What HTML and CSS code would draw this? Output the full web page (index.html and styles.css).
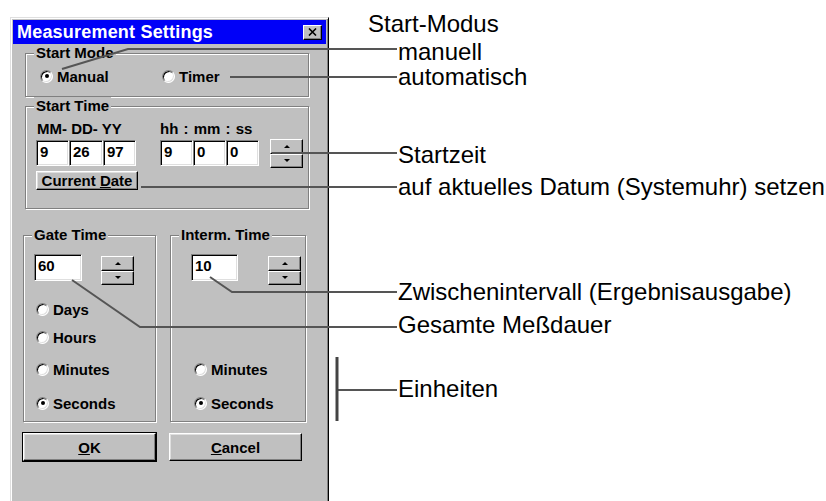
FILE: index.html
```html
<!DOCTYPE html>
<html lang="de">
<head>
<meta charset="UTF-8">
<meta name="viewport" content="width=device-width, initial-scale=1.0">
<title>Measurement Settings</title>
<link rel="stylesheet" href="styles.css">
</head>
<body>
<div class="page">

  <div class="dialog">
    <div class="titlebar">
      <span class="title">Measurement Settings</span>
      <span class="close">
        <svg width="9" height="8" viewBox="0 0 9 8"><path d="M1 0.5 L8 7.5 M8 0.5 L1 7.5" stroke="#000" stroke-width="1.6" fill="none"/></svg>
      </span>
    </div>

    <div class="client">
      <fieldset class="group start-mode">
        <legend>Start Mode</legend>
        <div class="group-body">
          <label class="radio manual"><span class="dot checked"></span>Manual</label>
          <label class="radio"><span class="dot"></span>Timer</label>
        </div>
      </fieldset>

      <fieldset class="group start-time">
        <legend>Start Time</legend>
        <div class="group-body">
          <div class="time-labels">
            <span class="date-label">MM- DD- YY</span>
            <span class="clock-label">hh : mm : ss</span>
          </div>
          <div class="time-row">
            <div class="fields">
              <span class="edit w33">9</span><span class="edit w34">26</span><span class="edit w33">97</span>
            </div>
            <div class="fields clock">
              <span class="edit w33">9</span><span class="edit w33">0</span><span class="edit w33">0</span>
            </div>
            <div class="spin clock-spin">
              <span class="spin-btn"><i class="arrow-up"></i></span>
              <span class="spin-btn"><i class="arrow-down"></i></span>
            </div>
          </div>
          <button type="button" class="btn current">Current <u>D</u>ate</button>
        </div>
      </fieldset>

      <div class="columns">
        <fieldset class="group gate">
          <legend>Gate Time</legend>
          <div class="group-body">
            <div class="value-row">
              <span class="edit value gate-value">60</span>
              <div class="spin">
                <span class="spin-btn"><i class="arrow-up"></i></span>
                <span class="spin-btn"><i class="arrow-down"></i></span>
              </div>
            </div>
            <label class="radio unit days"><span class="dot"></span>Days</label>
            <label class="radio unit hours"><span class="dot"></span>Hours</label>
            <label class="radio unit minutes"><span class="dot"></span>Minutes</label>
            <label class="radio unit seconds"><span class="dot checked"></span>Seconds</label>
          </div>
        </fieldset>

        <fieldset class="group interm">
          <legend>Interm. Time</legend>
          <div class="group-body">
            <div class="value-row">
              <span class="edit value interm-value">10</span>
              <div class="spin">
                <span class="spin-btn"><i class="arrow-up"></i></span>
                <span class="spin-btn"><i class="arrow-down"></i></span>
              </div>
            </div>
            <label class="radio unit minutes first"><span class="dot"></span>Minutes</label>
            <label class="radio unit seconds"><span class="dot checked"></span>Seconds</label>
          </div>
        </fieldset>
      </div>

      <div class="buttons">
        <button type="button" class="btn big default"><u>O</u>K</button>
        <button type="button" class="btn big"><u>C</u>ancel</button>
      </div>
    </div>
  </div>

  <!-- leader lines and captions -->
  <svg class="notes" width="826" height="501" viewBox="0 0 826 501">
    <g class="lead">
      <polyline points="62,69 128,49 397,49"/>
      <polyline points="230,77 397,77"/>
      <polyline points="272,153 397,153"/>
      <polyline points="141,187 397,187"/>
      <polyline points="210,277 232,292 397,292"/>
      <polyline points="72,280 140,327 397,327"/>
      <polyline points="337,390 397,390"/>
    </g>
    <line class="bracket" x1="337" y1="357" x2="337" y2="421"/>
    <text x="368" y="32">Start-Modus</text>
    <text x="398" y="60">manuell</text>
    <text x="398" y="85">automatisch</text>
    <text x="398" y="163">Startzeit</text>
    <text x="398" y="195">auf aktuelles Datum (Systemuhr) setzen</text>
    <text x="398" y="300">Zwischenintervall (Ergebnisausgabe)</text>
    <text x="398" y="333">Gesamte Meßdauer</text>
    <text x="398" y="397">Einheiten</text>
  </svg>

</div>
</body>
</html>
```

FILE: styles.css
```css
body {
  margin: 0;
  background-color: #fff;
  font-family: "Liberation Sans", Arial, sans-serif;
  overflow: hidden;
}
.page {
  position: relative;
  width: 826px;
  height: 501px;
  padding: 17px 0 0 10px;
  box-sizing: border-box;
  overflow: hidden;
}

/* window frame */
.dialog {
  width: 319px;
  height: 500px;
  box-sizing: border-box;
  background-color: #c0c0c0;
  border: 1px solid;
  border-color: #dfdfdf #000 #000 #dfdfdf;
  box-shadow: inset 1px 1px #fff, inset -1px -1px #808080;
  padding: 2px;
  font-size: 15px;
  font-weight: bold;
  color: #000;
}
.titlebar {
  height: 24px;
  background-color: #0000f8;
  display: flex;
  align-items: center;
  justify-content: space-between;
  padding: 0 4px;
}
.title {
  color: #fff;
  font-size: 18px;
  font-weight: bold;
  letter-spacing: 0.2px;
}
.close {
  width: 19px;
  height: 15px;
  box-sizing: border-box;
  background-color: #c0c0c0;
  border: 1px solid;
  border-color: #fff #000 #000 #fff;
  box-shadow: inset -1px -1px #808080;
  display: flex;
  align-items: center;
  justify-content: center;
}
.client {
  padding-left: 9px;
}

/* group boxes */
.group {
  margin: 0;
  padding: 0;
  min-width: 0;
  box-sizing: border-box;
  border: 1px solid #808080;
  box-shadow: inset 1px 1px #fff, 1px 1px #fff;
}
.group legend {
  margin-left: 8px;
  padding: 0 2px;
  line-height: 18px;
  background-color: #c0c0c0;
}
.start-mode,
.start-time {
  width: 284px;
  margin-left: 3px;
}
.start-mode .group-body {
  display: flex;
  padding: 5px 0 11px 14px;
}
.start-time .group-body {
  padding: 5px 0 18px 10px;
}

/* radio buttons */
.radio {
  display: flex;
  align-items: center;
  height: 18px;
}
.radio.manual {
  width: 122px;
}
.dot {
  width: 13px;
  height: 13px;
  box-sizing: border-box;
  border-radius: 50%;
  background-color: #fff;
  border: 1px solid;
  border-color: #808080 #fff #fff #808080;
  box-shadow: inset 1px 1px #000, inset -1px -1px #dfdfdf;
  margin-right: 4px;
  display: flex;
  align-items: center;
  justify-content: center;
}
.dot.checked::after {
  content: "";
  width: 4px;
  height: 4px;
  border-radius: 50%;
  background-color: #000;
}

/* edit boxes */
.time-labels {
  display: flex;
  line-height: 18px;
  padding-left: 1px;
}
.date-label {
  width: 123px;
}
.clock-label {
  word-spacing: 1px;
}
.time-row {
  display: flex;
  align-items: flex-start;
  margin-top: 2px;
  height: 26px;
}
.fields {
  display: flex;
}
.fields.clock {
  margin-left: 24px;
}
.edit {
  height: 26px;
  box-sizing: border-box;
  background-color: #fff;
  border: 1px solid;
  border-color: #808080 #fff #fff #808080;
  box-shadow: inset 1px 1px #000, inset -1px -1px #dfdfdf;
  padding: 2px 0 0 3px;
  line-height: 18px;
}
.w33 {
  width: 33px;
}
.w34 {
  width: 34px;
}

/* spin buttons */
.spin {
  width: 33px;
  height: 29px;
  display: flex;
  flex-direction: column;
  margin-top: -1px;
}
.spin-btn {
  flex: 1;
  box-sizing: border-box;
  background-color: #c0c0c0;
  border: 1px solid;
  border-color: #fff #000 #000 #fff;
  box-shadow: inset -1px -1px #808080;
  display: flex;
  align-items: center;
  justify-content: center;
}
.clock-spin {
  margin-left: 11px;
}
.arrow-up,
.arrow-down {
  width: 0;
  height: 0;
  border-left: 3px solid transparent;
  border-right: 3px solid transparent;
}
.arrow-up {
  border-bottom: 3px solid #000;
}
.arrow-down {
  border-top: 3px solid #000;
}

/* push buttons */
.btn {
  font-family: inherit;
  font-size: 15px;
  font-weight: bold;
  color: #000;
  background-color: #c0c0c0;
  border: 1px solid;
  border-color: #fff #000 #000 #fff;
  box-shadow: inset -1px -1px #808080, inset 1px 1px #dfdfdf;
  padding: 0;
  border-radius: 0;
  cursor: pointer;
}
.btn.current {
  display: block;
  width: 102px;
  height: 19px;
  margin-top: 5px;
  line-height: 16px;
}
.btn.big {
  width: 133px;
  height: 28px;
}
.btn.default {
  outline: 1px solid #000;
}

/* lower groups */
.columns {
  display: flex;
  margin-top: 17px;
}
.gate {
  width: 133px;
  margin-left: 1px;
}
.interm {
  width: 136px;
  margin-left: 14px;
}
.gate .group-body {
  padding: 11px 0 9px 10px;
}
.interm .group-body {
  padding: 11px 0 9px 20px;
}
.value-row {
  display: flex;
  align-items: flex-start;
  padding-top: 1px;
  margin-top: -1px;
}
.value-row .spin {
  margin-top: 1px;
}
.edit.value {
  height: 27px;
  margin-top: -1px;
}
.gate-value {
  width: 48px;
  margin-right: 19px;
}
.interm-value {
  width: 47px;
  margin-right: 30px;
}
.unit {
  margin-left: 2px;
}
.interm .unit {
  margin-left: 3px;
}
.unit.days {
  margin-top: 15px;
}
.unit.hours {
  margin-top: 10px;
}
.unit.minutes {
  margin-top: 14px;
}
.unit.minutes.first {
  margin-top: 75px;
}
.unit.seconds {
  margin-top: 16px;
}

.buttons {
  display: flex;
  gap: 13px;
  margin-top: 11px;
  padding-left: 1px;
}

/* annotations */
.notes {
  position: absolute;
  top: 0;
  left: 0;
}
.lead polyline {
  fill: none;
  stroke: #555;
  stroke-width: 2;
}
.bracket {
  stroke: #444;
  stroke-width: 3;
}
.notes text {
  font-family: "Liberation Sans", Arial, sans-serif;
  font-size: 24px;
  fill: #000;
}
```
